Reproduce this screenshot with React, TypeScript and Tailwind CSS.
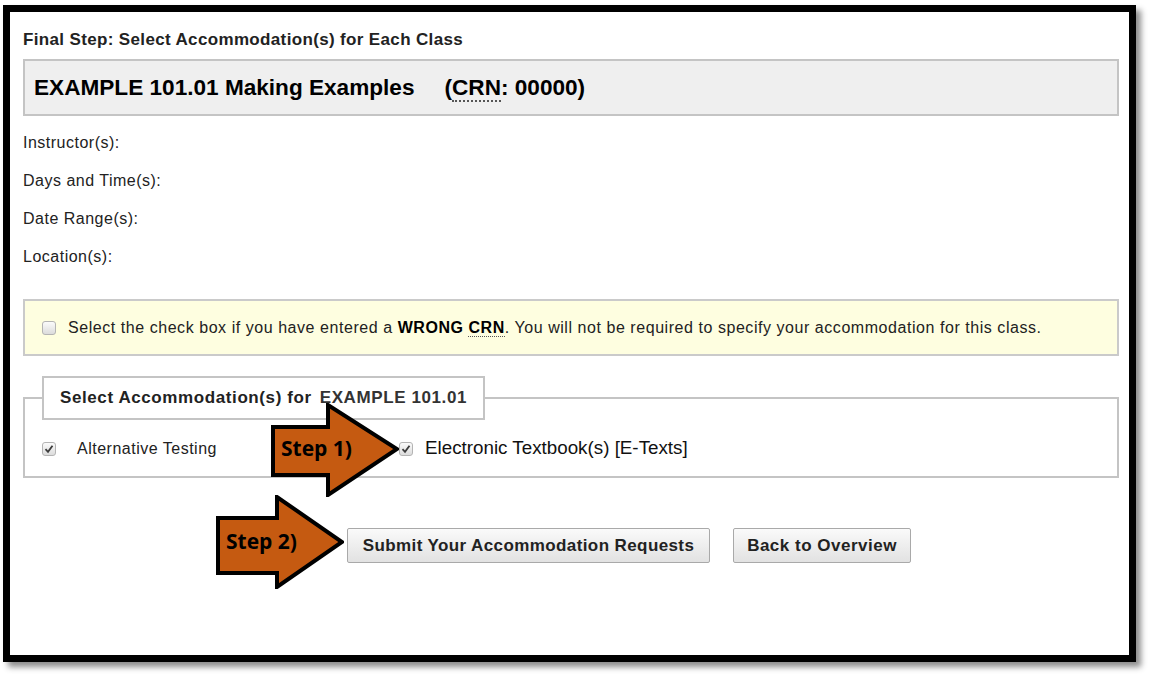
import React from 'react';

const font = { fontFamily: '"Liberation Sans", Arial, sans-serif' };

const CheckBox: React.FC<{ checked?: boolean }> = ({ checked }) => (
  <span className="inline-flex items-center justify-center w-[14px] h-[14px] rounded-[3px] border border-[#b4b4b4] bg-gradient-to-b from-[#fbfbfb] to-[#dcdcdc] shrink-0">
    {checked && (
      <svg width="10" height="10" viewBox="0 0 10 10">
        <path d="M1.5 5.2 L4 7.8 L8.5 1.8" fill="none" stroke="#3c3c3c" strokeWidth="1.8" />
      </svg>
    )}
  </span>
);

const StepArrow: React.FC<{ label: string; x: number; y: number; w: number; h: number; body: [number, number, number]; head: [number, number] }> = ({ label, x, y, w, h, body, head }) => {
  // body: [bodyRight, bodyTop, bodyBottom] ; head: [tipX, tipY]
  const [br, bt, bb] = body;
  const [tx, ty] = head;
  const pts = `2,${bt} ${br},${bt} ${br},2 ${tx},${ty} ${br},${h - 2} ${br},${bb} 2,${bb}`;
  return (
    <div className="absolute" style={{ left: x, top: y, width: w, height: h }}>
      <svg width={w} height={h} className="absolute inset-0">
        <polygon points={pts} fill="#c55a11" stroke="#000" strokeWidth="4" strokeLinejoin="miter" />
      </svg>
      <span
        className="absolute text-[21px] font-bold text-black leading-none"
        style={{ left: 10, top: ty - 11, fontFamily: '"Open Sans", "Liberation Sans", sans-serif' }}
      >
        {label}
      </span>
    </div>
  );
};

export default function App() {
  return (
    <div className="relative w-[1149px] h-[674px] bg-white overflow-hidden" style={font}>
      <div className="ml-[3px] mt-[5px] w-[1133px] h-[657px] border-[7px] border-black bg-white shadow-[5px_5px_6px_rgba(0,0,0,0.45)] pl-[13px] pr-[10px]">
        <h1 className="mt-[19px] text-[17px] tracking-[0.35px] font-bold text-[#222] leading-[17px]">
          Final Step: Select Accommodation(s) for Each Class
        </h1>

        <div className="mt-[11px] h-[57px] border-2 border-[#c4c4c4] bg-[#efefef] flex items-center px-[9px]">
          <span className="text-[22.6px] font-bold text-black">EXAMPLE 101.01 Making Examples</span>
          <span className="ml-[30px] text-[22.6px] font-bold text-black">
            (<abbr className="no-underline border-b-2 border-dotted border-[#555]">CRN</abbr>: 00000)
          </span>
        </div>

        <div className="mt-[8px] text-[16px] tracking-[0.5px] text-[#222]">
          <div className="h-[38px] flex items-center">Instructor(s):</div>
          <div className="h-[38px] flex items-center">Days and Time(s):</div>
          <div className="h-[38px] flex items-center">Date Range(s):</div>
          <div className="h-[38px] flex items-center">Location(s):</div>
        </div>

        <div className="mt-[23px] h-[57px] border-2 border-[#cacaca] bg-[#fefee0] flex items-center pl-[17px] text-[16px] tracking-[0.55px] text-[#222]">
          <CheckBox />
          <span className="ml-[12px]">
            Select the check box if you have entered a{' '}
            <b className="text-black">
              WRONG <abbr className="no-underline border-b border-dotted border-[#555]">CRN</abbr>
            </b>
            . You will not be required to specify your accommodation for this class.
          </span>
        </div>

        <fieldset className="mt-[20px] border-2 border-[#c4c4c4] px-[17px] pb-[19px]">
          <legend className="h-[44px] px-[16px] border-2 border-[#c4c4c4] bg-white flex items-center text-[17px] tracking-[0.6px] font-bold text-[#222]">
            Select Accommodation(s) for <span className="ml-[8px] text-[#333]">EXAMPLE 101.01</span>
          </legend>
          <div className="flex items-center h-[17px] mt-[20px]">
            <div className="w-[357px] flex items-center">
              <CheckBox checked />
              <span className="ml-[21px] text-[16px] tracking-[0.5px] text-[#222]">Alternative Testing</span>
            </div>
            <CheckBox checked />
            <span className="ml-[12px] text-[18.8px] text-[#111]">Electronic Textbook(s) [E-Texts]</span>
          </div>
        </fieldset>

        <div className="mt-[50px] flex items-center gap-[23px] pl-[324px]">
          <button className="h-[35px] w-[363px] border border-[#a9a9a9] rounded-[2px] bg-gradient-to-b from-[#fafafa] to-[#e2e2e2] text-[17px] tracking-[0.4px] font-bold text-[#222]">
            Submit Your Accommodation Requests
          </button>
          <button className="h-[35px] w-[178px] border border-[#a9a9a9] rounded-[2px] bg-gradient-to-b from-[#fafafa] to-[#e2e2e2] text-[17px] tracking-[0.5px] font-bold text-[#222]">
            Back to Overview
          </button>
        </div>
      </div>

      <StepArrow label="Step 1)" x={271} y={403} w={128} h={94} body={[57, 24, 72]} head={[126, 46]} />
      <StepArrow label="Step 2)" x={216} y={495} w={128} h={94} body={[61, 23, 78]} head={[126, 47]} />
    </div>
  );
}
